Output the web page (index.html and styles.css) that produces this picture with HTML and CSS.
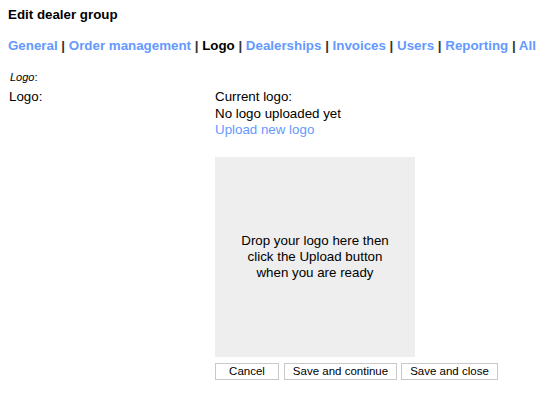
FILE: index.html
```html
<!DOCTYPE html>
<html>
<head>
    <title>Edit dealer group</title>
    <meta name="viewport" content="width=device-width, initial-scale=1.0">
    <link rel="stylesheet" href="styles.css">
</head>
<body>
    <h1>Edit dealer group</h1>

    <!-- Section tabs -->
    <div class="tabs">
        <a href="#">General</a> |
        <a href="#">Order management</a> |
        <span class="current">Logo</span> |
        <a href="#">Dealerships</a> |
        <a href="#">Invoices</a> |
        <a href="#">Users</a> |
        <a href="#">Reporting</a> |
        <a href="#">All</a>
    </div>

    <div class="section-title"><em>Logo</em>:</div>

    <div class="field">
        <div class="field-label">Logo:</div>
        <div class="field-value">
            <div>Current logo:</div>
            <div>No logo uploaded yet</div>
            <a href="#" class="upload-link">Upload new logo</a>

            <div class="dropzone">
                Drop your logo here then click the Upload button when you are ready
            </div>

            <div class="buttons">
                <button class="btn-cancel">Cancel</button>
                <button class="btn-continue">Save and continue</button>
                <button class="btn-close">Save and close</button>
            </div>
        </div>
    </div>
</body>
</html>
```

FILE: styles.css
```css
body {
    font-family: "Liberation Sans", Arial, sans-serif;
    font-size: 13.33px;
    color: #000;
    background-color: #fff;
    margin: 8px;
}

a {
    color: #6699ff;
    text-decoration: none;
}

h1 {
    font-size: 13.33px;
    font-weight: bold;
    margin: 0;
    line-height: 14px;
}

.tabs {
    margin-top: 16px;
    font-weight: bold;
    line-height: 16px;
    color: #333;
}

.tabs .current {
    color: #000;
}

.section-title {
    margin-top: 16px;
    font-size: 11px;
    line-height: 14px;
    padding-left: 2px;
}

.field {
    display: grid;
    grid-template-columns: 207px auto;
    margin-top: 5px;
    line-height: 16.5px;
}

.field-label {
    padding-left: 1px;
}

.upload-link {
    display: block;
}

.dropzone {
    width: 200px;
    height: 200px;
    margin-top: 18px;
    background-color: #eeeeee;
    display: flex;
    align-items: center;
    justify-content: center;
    text-align: center;
    padding: 0 20px;
    box-sizing: border-box;
    line-height: 16px;
}

.buttons {
    display: flex;
    margin-top: 6px;
    white-space: nowrap;
}

button {
    flex: none;
    font-family: "Liberation Sans", Arial, sans-serif;
    font-size: 11.5px;
    background-color: #fff;
    border: 1px solid #c8c8c8;
    border-radius: 0;
    height: 17px;
    padding: 0;
    line-height: 15px;
    color: #000;
}

.btn-cancel {
    width: 64px;
}

.btn-continue {
    width: 113px;
    margin-left: 5px;
}

.btn-close {
    width: 97px;
    margin-left: 4px;
}
```
